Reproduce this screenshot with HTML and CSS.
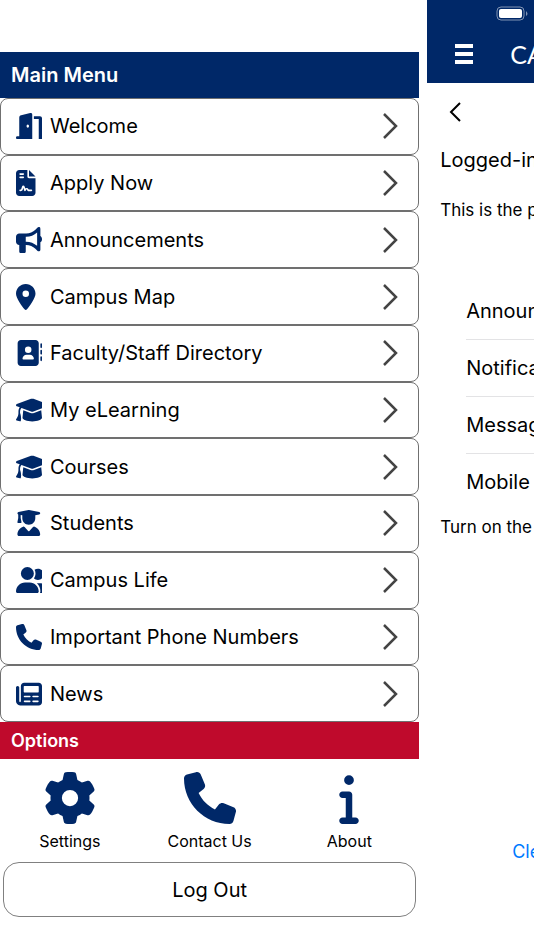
FILE: index.html
```html
<!DOCTYPE html>
<html lang="en">
<head>
    <meta charset="UTF-8">
    <meta name="viewport" content="width=device-width, initial-scale=1.0">
    <title>Main Menu</title>
    <link rel="stylesheet" href="styles.css">
</head>
<body>
    <div class="app">
        <nav class="drawer">
            <h1 class="bar">Main Menu</h1>
            <ul class="menu">
                <li><a href="#welcome">
                    <svg class="icon" viewBox="0 0 512 512"><path d="M320 32c0-9.9-4.5-19.2-12.3-25.2S289.8-1.4 280.2 1l-179.9 45C79 51.3 64 70.5 64 92.5V460H24c-14 0-24 12-24 26s10 26 24 26H320zM256 256c0 17.7-10.7 32-24 32s-24-14.3-24-32s10.7-32 24-32s24 14.3 24 32zM352 64H472c22 0 40 18 40 40V512H448V120H352z"/></svg>
                    <span>Welcome</span>
                    <svg class="chevron" viewBox="0 0 16 28"><path d="M2 2l12 12L2 26"/></svg>
                </a></li>
                <li><a href="#apply">
                    <svg class="icon" viewBox="0 0 512 512"><path d="M64 0C28.7 0 0 28.7 0 64V448c0 35.3 28.7 64 64 64H320c35.3 0 64-28.7 64-64V160H256c-17.7 0-32-14.3-32-32V0H64zM256 0V128H384L256 0zM80 64h64c8.8 0 16 7.2 16 16s-7.2 16-16 16H80c-8.8 0-16-7.2-16-16s7.2-16 16-16zm0 64h64c8.8 0 16 7.2 16 16s-7.2 16-16 16H80c-8.8 0-16-7.2-16-16s7.2-16 16-16zm54.2 253.8c-6.1 20.3-24.8 34.2-46 34.2H80c-8.8 0-16-7.2-16-16s7.2-16 16-16h8.2c7.1 0 13.3-4.6 15.3-11.4l14.9-49.5c3.4-11.3 13.8-19.1 25.6-19.1s22.2 7.7 25.6 19.1l11.6 38.6c7.4-6.2 16.8-9.7 26.8-9.7c15.9 0 30.4 9 37.5 23.2l4.4 8.8H304c8.8 0 16 7.2 16 16s-7.2 16-16 16H240c-6.1 0-11.6-3.4-14.3-8.8l-8.8-17.7c-1.7-3.4-5.1-5.5-8.8-5.5s-7.2 2.1-8.8 5.5l-8.8 17.7c-2.9 5.9-9.2 9.4-15.7 8.8s-12.1-5.1-13.9-11.3L144 349l-9.8 32.8z"/></svg>
                    <span>Apply Now</span>
                    <svg class="chevron" viewBox="0 0 16 28"><path d="M2 2l12 12L2 26"/></svg>
                </a></li>
                <li><a href="#announcements">
                    <svg class="icon" viewBox="0 0 512 512"><path d="M480 32c0-12.9-7.8-24.6-19.8-29.6s-25.7-2.2-34.9 6.9L381.7 53c-48 48-113.1 75-181 75H192 160 64c-35.3 0-64 28.7-64 64v96c0 35.3 28.7 64 64 64l0 128c0 17.7 14.3 32 32 32h64c17.7 0 32-14.3 32-32V352l8.7 0c67.9 0 133 27 181 75l43.6 43.6c9.2 9.2 22.9 11.9 34.9 6.9s19.8-16.6 19.8-29.6V300.4c18.6-8.8 32-32.5 32-60.4s-13.4-51.6-32-60.4V32zm-64 76.7V240 371.3C357.2 317.8 280.5 288 200.7 288H192V192h8.7c79.8 0 156.5-29.8 215.3-83.3z"/></svg>
                    <span>Announcements</span>
                    <svg class="chevron" viewBox="0 0 16 28"><path d="M2 2l12 12L2 26"/></svg>
                </a></li>
                <li><a href="#map">
                    <svg class="icon" viewBox="0 0 512 512"><path d="M215.7 499.2C267 435 384 279.4 384 192C384 86 298 0 192 0S0 86 0 192c0 87.4 117 243 168.3 307.2c12.3 15.3 35.1 15.3 47.4 0zM192 128a64 64 0 1 1 0 128 64 64 0 1 1 0-128z"/></svg>
                    <span>Campus Map</span>
                    <svg class="chevron" viewBox="0 0 16 28"><path d="M2 2l12 12L2 26"/></svg>
                </a></li>
                <li><a href="#directory">
                    <svg class="icon" viewBox="0 0 512 512"><path d="M96 0C60.7 0 32 28.7 32 64V448c0 35.3 28.7 64 64 64H384c35.3 0 64-28.7 64-64V64c0-35.3-28.7-64-64-64H96zM208 288h64c44.2 0 80 35.8 80 80c0 8.8-7.2 16-16 16H144c-8.8 0-16-7.2-16-16c0-44.2 35.8-80 80-80zm-32-96a64 64 0 1 1 128 0 64 64 0 1 1 -128 0zM512 80c0-8.8-7.2-16-16-16s-16 7.2-16 16v64c0 8.8 7.2 16 16 16s16-7.2 16-16V80zM496 192c-8.8 0-16 7.2-16 16v64c0 8.8 7.2 16 16 16s16-7.2 16-16V208c0-8.8-7.2-16-16-16zm16 144c0-8.8-7.2-16-16-16s-16 7.2-16 16v64c0 8.8 7.2 16 16 16s16-7.2 16-16V336z"/></svg>
                    <span>Faculty/Staff Directory</span>
                    <svg class="chevron" viewBox="0 0 16 28"><path d="M2 2l12 12L2 26"/></svg>
                </a></li>
                <li><a href="#elearning">
                    <svg class="icon" viewBox="0 0 512 512"><path id="cap" d="M320 32c-8.1 0-16.1 1.4-23.7 4.1L15.8 137.4C6.3 140.9 0 149.9 0 160s6.3 19.1 15.8 22.6l57.9 20.9C57.3 229.3 48 259.8 48 291.9v28.1c0 28.4-10.8 57.7-22.3 80.8c-6.5 13-13.9 25.8-22.5 37.6C0 442.7-.9 448.3 .9 453.4s6 8.9 11.2 10.2l64 16c4.2 1.1 8.7 .3 12.4-2s6.3-6.1 7.1-10.4c8.6-42.8 4.3-81.2-2.1-108.7C90.3 344.3 86 329.8 80 316.5V291.9c0-30.2 10.2-58.7 27.9-76L296.3 283.9c7.6 2.7 15.6 4.1 23.7 4.1s16.1-1.4 23.7-4.1L624.2 182.6c9.5-3.4 15.8-12.5 15.8-22.6s-6.3-19.1-15.8-22.6L343.7 36.1C336.1 33.4 328.1 32 320 32zM128 408c0 35.3 86 72 192 72s192-36.7 192-72L496.7 262.6 354.5 314c-11.1 4-22.8 6-34.5 6s-23.5-2-34.5-6L143.3 262.6 128 408z"/></svg>
                    <span>My eLearning</span>
                    <svg class="chevron" viewBox="0 0 16 28"><path d="M2 2l12 12L2 26"/></svg>
                </a></li>
                <li><a href="#courses">
                    <svg class="icon" viewBox="0 0 512 512"><use href="#cap"/></svg>
                    <span>Courses</span>
                    <svg class="chevron" viewBox="0 0 16 28"><path d="M2 2l12 12L2 26"/></svg>
                </a></li>
                <li><a href="#students">
                    <svg class="icon" viewBox="-28 0 512 512"><path d="M219.3 .5c3.1-.6 6.3-.6 9.4 0l200 40C439.9 42.7 448 52.6 448 64s-8.1 21.3-19.3 23.5L352 102.9V160c0 70.7-57.3 128-128 128s-128-57.3-128-128V102.9L64 96v62l15.700 78.400c.9 4.700-.3 9.600-3.300 13.300s-7.600 5.900-12.400 5.900H16c-4.800 0-9.300-2.100-12.400-5.900s-4.300-8.600-3.300-13.300L16 158.400V86.600C6.500 83.300 0 74.300 0 64C0 52.600 8.100 42.700 19.300 40.500l200-40zM111.900 327.700c10.500-3.400 21.800 .4 29.400 8.500l71 75.500c6.300 6.700 17 6.700 23.300 0l71-75.500c7.600-8.100 18.900-11.900 29.400-8.500C401 348.600 448 409.400 448 481.300c0 17-13.800 30.700-30.700 30.700H30.700C13.800 512 0 498.200 0 481.300c0-71.900 47-132.700 111.900-153.600z"/></svg>
                    <span>Students</span>
                    <svg class="chevron" viewBox="0 0 16 28"><path d="M2 2l12 12L2 26"/></svg>
                </a></li>
                <li><a href="#life">
                    <svg class="icon" viewBox="0 0 512 512"><path d="M96 128a128 128 0 1 1 256 0A128 128 0 1 1 96 128zM0 482.3C0 383.8 79.8 304 178.3 304h91.4C368.2 304 448 383.8 448 482.3c0 16.4-13.3 29.7-29.7 29.7H29.7C13.3 512 0 498.7 0 482.3zM609.3 512H471.4c5.4-9.4 8.6-20.3 8.6-32v-8c0-60.7-27.1-115.2-69.8-151.8c2.4-.1 4.7-.2 7.1-.2h61.4C567.8 320 640 392.2 640 481.3c0 17-13.8 30.7-30.7 30.7zM432 256c-31 0-59-12.6-79.3-32.9C372.4 196.5 384 163.6 384 128c0-26.8-6.6-52.1-18.3-74.3C384.3 40.1 407.2 32 432 32c61.9 0 112 50.1 112 112s-50.1 112-112 112z"/></svg>
                    <span>Campus Life</span>
                    <svg class="chevron" viewBox="0 0 16 28"><path d="M2 2l12 12L2 26"/></svg>
                </a></li>
                <li><a href="#phones">
                    <svg class="icon" viewBox="0 0 512 512"><path id="phone" d="M164.9 24.6c-7.7-18.6-28-28.5-47.4-23.2l-88 24C12.1 30.2 0 46 0 64C0 311.4 200.6 512 448 512c18 0 33.8-12.1 38.6-29.5l24-88c5.3-19.4-4.6-39.7-23.2-47.4l-96-40c-16.3-6.8-35.2-2.1-46.3 11.6L304.7 368C234.3 334.7 177.3 277.7 144 207.3L193.3 167c13.7-11.2 18.4-30 11.6-46.3l-40-96z"/></svg>
                    <span>Important Phone Numbers</span>
                    <svg class="chevron" viewBox="0 0 16 28"><path d="M2 2l12 12L2 26"/></svg>
                </a></li>
                <li><a href="#news">
                    <svg class="icon" viewBox="0 0 512 512"><path d="M96 96c0-35.3 28.7-64 64-64H448c35.3 0 64 28.7 64 64V416c0 35.3-28.7 64-64 64H80c-44.2 0-80-35.8-80-80V128c0-17.7 14.3-32 32-32s32 14.3 32 32V400c0 8.8 7.2 16 16 16s16-7.2 16-16V96zm56 12v104c0 6 6 12 12 12H436c6 0 12-6 12-12V108c0-6-6-12-12-12H164c-6 0-12 6-12 12zm0 196c0 8.8 7.2 16 16 16h104c8.8 0 16-7.2 16-16s-7.2-16-16-16H168c-8.8 0-16 7.2-16 16zm168 0c0 8.8 7.2 16 16 16h96c8.8 0 16-7.2 16-16s-7.2-16-16-16H336c-8.8 0-16 7.2-16 16zM152 400c0 8.8 7.2 16 16 16h104c8.8 0 16-7.2 16-16s-7.2-16-16-16H168c-8.8 0-16 7.2-16 16zm168 0c0 8.8 7.2 16 16 16h96c8.8 0 16-7.2 16-16s-7.2-16-16-16H336c-8.8 0-16 7.2-16 16z"/></svg>
                    <span>News</span>
                    <svg class="chevron" viewBox="0 0 16 28"><path d="M2 2l12 12L2 26"/></svg>
                </a></li>
            </ul>
            <h2 class="bar options-bar">Options</h2>
            <div class="options">
                <a href="#settings">
                    <svg viewBox="0 0 512 512"><path d="M495.9 166.6c3.2 8.7 .5 18.4-6.4 24.6l-43.3 39.4c1.1 8.3 1.7 16.8 1.7 25.4s-.6 17.1-1.7 25.4l43.3 39.4c6.9 6.2 9.6 15.9 6.4 24.6c-4.4 11.9-9.7 23.3-15.8 34.3l-4.7 8.1c-6.6 11-14 21.4-22.1 31.2c-5.9 7.2-15.7 9.6-24.5 6.8l-55.7-17.7c-13.4 10.3-28.2 18.9-44 25.4l-12.5 57.1c-2 9.1-9 16.3-18.2 17.8c-13.8 2.3-28 3.5-42.5 3.5s-28.7-1.2-42.5-3.5c-9.2-1.5-16.2-8.7-18.2-17.8l-12.5-57.1c-15.8-6.5-30.6-15.1-44-25.4L83.1 425.9c-8.8 2.8-18.6 .3-24.5-6.8c-8.1-9.8-15.5-20.2-22.1-31.2l-4.7-8.1c-6.1-11-11.4-22.4-15.8-34.3c-3.2-8.7-.5-18.4 6.4-24.6l43.3-39.4C64.6 273.1 64 264.6 64 256s.6-17.1 1.7-25.4L22.4 191.2c-6.9-6.2-9.6-15.9-6.4-24.6c4.4-11.9 9.7-23.3 15.8-34.3l4.7-8.1c6.6-11 14-21.4 22.1-31.2c5.9-7.2 15.7-9.6 24.5-6.8l55.7 17.7c13.4-10.3 28.2-18.9 44-25.4l12.5-57.1c2-9.1 9-16.3 18.2-17.8C227.3 1.2 241.5 0 256 0s28.7 1.2 42.5 3.5c9.2 1.5 16.2 8.7 18.2 17.8l12.5 57.1c15.8 6.5 30.6 15.1 44 25.4l55.7-17.7c8.8-2.8 18.6-.3 24.5 6.8c8.1 9.8 15.5 20.2 22.1 31.2l4.7 8.1c6.1 11 11.4 22.4 15.8 34.3zM256 336a80 80 0 1 0 0-160 80 80 0 1 0 0 160z"/></svg>
                    <span>Settings</span>
                </a>
                <a href="#contact">
                    <svg viewBox="0 0 512 512"><use href="#phone"/></svg>
                    <span>Contact Us</span>
                </a>
                <a href="#about">
                    <svg viewBox="-160 0 512 512"><path d="M48 80a48 48 0 1 1 96 0A48 48 0 1 1 48 80zM0 224c0-17.7 14.3-32 32-32H96c17.7 0 32 14.3 32 32V448h32c17.7 0 32 14.3 32 32s-14.3 32-32 32H32c-17.7 0-32-14.3-32-32s14.3-32 32-32H64V256H32c-17.7 0-32-14.3-32-32z"/></svg>
                    <span>About</span>
                </a>
            </div>
            <button class="logout">Log Out</button>
        </nav>

        <main class="page">
            <header class="top">
                <svg class="battery" viewBox="0 0 32 16"><rect class="shell" x="1" y="1" width="27" height="13" rx="4"/><rect class="charge" x="3" y="3" width="23" height="9" rx="2"/><path class="tip" d="M30 5q3 3 0 5z"/></svg>
                <div class="top-row">
                    <button class="menu-btn" aria-label="Menu"><svg viewBox="0 0 18 20"><path d="M0 0h18v4H0zM0 8h18v4H0zM0 16h18v4H0z"/></svg></button>
                    <span class="title">CAMPUS</span>
                </div>
            </header>
            <button class="back" aria-label="Back"><svg viewBox="0 0 12 20"><path d="M11 1L2 10l9 9"/></svg></button>
            <p class="lead">Logged-in</p>
            <p class="note">This is the page</p>
            <ul class="settings">
                <li>Announcements</li>
                <li>Notifications</li>
                <li>Messages</li>
                <li>Mobile</li>
            </ul>
            <p class="note">Turn on the</p>
            <a class="clear" href="#clear">Clear</a>
        </main>
    </div>
</body>
</html>
```

FILE: styles.css
```css
* {
    box-sizing: border-box;
}
body {
    margin: 0;
    background: white;
    color: #000;
    font-family: Inter, "Liberation Sans", sans-serif;
    font-size: 20px;
}
h1, h2, p, ul {
    margin: 0;
    padding: 0;
}
ul {
    list-style: none;
}
a {
    color: inherit;
    text-decoration: none;
}
button {
    font: inherit;
    color: inherit;
    background: none;
    border: none;
    padding: 0;
    cursor: pointer;
}
svg {
    display: block;
    fill: #002868;
}
.app {
    display: flex;
    min-height: 100vh;
    overflow: hidden;
}

/* left drawer */
.drawer {
    flex: 0 0 80%;
    display: flex;
    flex-direction: column;
    padding: 52px 8px 33px 0;
}
.bar {
    background: #002868;
    color: white;
    font-size: 20px;
    font-weight: 600;
    line-height: 46px;
    padding-left: 11px;
}
.menu {
    flex: 1;
    display: grid;
    grid-auto-rows: 1fr;
}
.menu a {
    display: flex;
    align-items: center;
    gap: 8px;
    height: 100%;
    padding: 0 20px 0 15px;
    border: 1px solid #707070;
    border-radius: 8px;
}
.menu span {
    flex: 1;
}
.icon {
    width: 26px;
    height: 26px;
}
.chevron {
    width: 16px;
    height: 28px;
    fill: none;
    stroke: #444;
    stroke-width: 2.5;
}
.options-bar {
    background: #bf0a2c;
    font-size: 18px;
    line-height: 37px;
}
.options {
    display: grid;
    grid-template-columns: repeat(3, 1fr);
    padding: 13px 0 11px;
    font-size: 16px;
}
.options a {
    display: flex;
    flex-direction: column;
    align-items: center;
    gap: 7px;
    line-height: 20px;
}
.options svg {
    width: 52px;
    height: 52px;
}
.logout {
    height: 55px;
    margin: 0 3px;
    border: 1px solid #808080;
    border-radius: 16px;
}

/* page pushed aside by the drawer */
.page {
    flex: 1;
    min-width: 0;
    overflow: hidden;
    white-space: nowrap;
    display: flex;
    flex-direction: column;
}
.top {
    height: 83px;
    background: #002868;
    padding: 6px 0 0 28px;
}
.top svg {
    fill: white;
}
.battery {
    width: 32px;
    height: 16px;
    margin-left: 41px;
}
.battery .shell {
    fill: none;
    stroke: #8093b3;
}
.battery .tip {
    fill: #8093b3;
}
.top-row {
    display: flex;
    align-items: center;
    gap: 37px;
    padding-top: 16px;
}
.menu-btn svg {
    width: 18px;
    height: 20px;
}
.title {
    color: white;
    font-family: Lato, sans-serif;
    font-size: 25px;
    line-height: 32px;
}
.back {
    align-self: flex-start;
    margin: 19px 0 0 22px;
}
.back svg {
    width: 12px;
    height: 20px;
    fill: none;
    stroke: #000;
    stroke-width: 2;
}
.lead {
    padding: 26px 0 0 13px;
    line-height: 24px;
}
.note {
    padding-left: 13px;
    font-size: 17px;
    line-height: 24px;
}
.lead + .note {
    padding-top: 26px;
}
.settings {
    margin: 61px 0 5px 39px;
}
.settings li {
    line-height: 56px;
    border-bottom: 1px solid #e3e3e5;
}
.settings li:last-child {
    border-bottom: none;
}
.clear {
    margin: auto 0 86px 85px;
    color: #007aff;
    font-size: 18px;
    line-height: 24px;
}
```
